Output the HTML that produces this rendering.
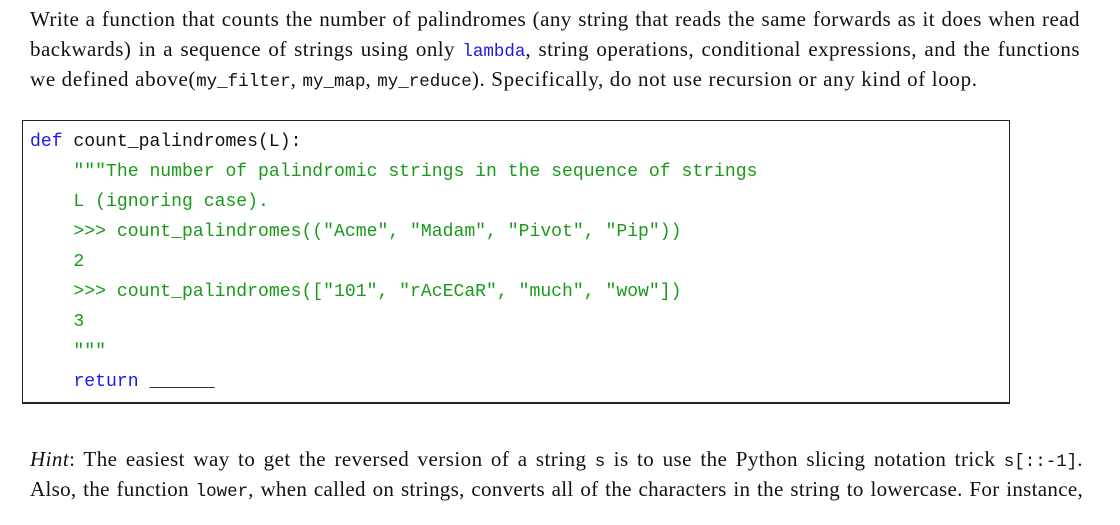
<!DOCTYPE html>
<html><head><meta charset="utf-8"><style>
body{margin:0;width:1120px;height:525px;background:#fff;overflow:hidden;position:relative;font-family:"Liberation Serif",serif;color:#111;}
.l{position:absolute;left:30px;width:1050px;font-size:21px;letter-spacing:0.45px;line-height:30px;white-space:nowrap;}
.j{text-align:justify;text-align-last:justify;}
.m{font-family:"Liberation Mono",monospace;font-size:17.5px;letter-spacing:0;}
.box{position:absolute;left:22px;top:120px;width:986px;height:281px;border:1px solid #222;border-bottom:2px solid #222;border-right:1.5px solid #222;}
.c{position:absolute;left:30px;font-family:"Liberation Mono",monospace;font-size:18.1px;line-height:30px;white-space:pre;color:#111;}
.g{color:#1a9a1a}.b{color:#1a1ae6}
</style></head><body>
<div class="l j" style="top:4px">Write a function that counts the number of palindromes (any string that reads the same forwards as it does when read</div>
<div class="l j" style="top:34px">backwards) in a sequence of strings using only <span class="m b">lambda</span>, string operations, conditional expressions, and the functions</div>
<div class="l" style="top:64px;letter-spacing:0.65px">we defined above(<span class="m">my_filter</span>, <span class="m">my_map</span>, <span class="m">my_reduce</span>). Specifically, do not use recursion or any kind of loop.</div>
<div class="box"></div>
<div class="c" style="top:127px"><span class="b">def</span> count_palindromes(L):</div>
<div class="c g" style="top:157px">    """The number of palindromic strings in the sequence of strings</div>
<div class="c g" style="top:187px">    L (ignoring case).</div>
<div class="c g" style="top:217px">    &gt;&gt;&gt; count_palindromes(("Acme", "Madam", "Pivot", "Pip"))</div>
<div class="c g" style="top:247px">    2</div>
<div class="c g" style="top:277px">    &gt;&gt;&gt; count_palindromes(["101", "rAcECaR", "much", "wow"])</div>
<div class="c g" style="top:307px">    3</div>
<div class="c g" style="top:337px">    """</div>
<div class="c" style="top:367px">    <span class="b">return</span> ______</div>
<div class="l j" style="top:444px;width:1053px"><i>Hint</i>: The easiest way to get the reversed version of a string <span class="m">s</span> is to use the Python slicing notation trick <span class="m">s[::-1]</span>.</div>
<div class="l j" style="top:474px;width:1053px;letter-spacing:0.3px">Also, the function <span class="m">lower</span>, when called on strings, converts all of the characters in the string to lowercase. For instance,</div>
</body></html>
